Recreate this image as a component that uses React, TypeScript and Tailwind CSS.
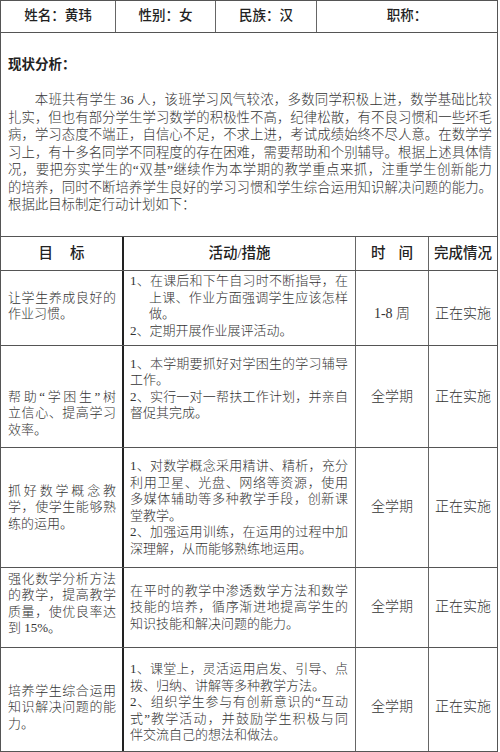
import clsx from 'clsx'

type Line = { t: string; j?: boolean; hang?: boolean }

type PlanRow = {
  h: string
  goal: Line[]
  goalPad: string
  act: Line[]
  actPad: string
  time: string
  timePad: string
}

const intro: Line[] = [
  { t: '本班共有学生 36 人，该班学习风气较浓，多数同学积极上进，数学基础比较', j: true },
  { t: '扎实，但也有部分学生学习数学的积极性不高，纪律松散，有不良习惯和一些坏毛', j: true },
  { t: '病，学习态度不端正，自信心不足，不求上进，考试成绩始终不尽人意。在数学学', j: true },
  { t: '习上，有十多名同学不同程度的存在困难，需要帮助和个别辅导。根据上述具体情', j: true },
  { t: '况，要把夯实学生的“双基”继续作为本学期的教学重点来抓，注重学生创新能力', j: true },
  { t: '的培养，同时不断培养学生良好的学习习惯和学生综合运用知识解决问题的能力。', j: true },
  { t: '根据此目标制定行动计划如下：' },
]

const rows: PlanRow[] = [
  {
    h: 'h-[75px]',
    goal: [{ t: '让学生养成良好的', j: true }, { t: '作业习惯。' }],
    goalPad: 'pb-[4px]',
    act: [
      { t: '1、在课后和下午自习时不断指导，在', j: true },
      { t: '上课、作业方面强调学生应该怎样', j: true, hang: true },
      { t: '做。', hang: true },
      { t: '2、定期开展作业展评活动。' },
    ],
    actPad: 'pb-[4px]',
    time: '1-8 周',
    timePad: 'pt-[12px]',
  },
  {
    h: 'h-[102px]',
    goal: [
      { t: '帮助“学困生”树', j: true },
      { t: '立信心、提高学习', j: true },
      { t: '效率。' },
    ],
    goalPad: 'pt-[34px]',
    act: [
      { t: '1、本学期要抓好对学困生的学习辅导', j: true },
      { t: '工作。' },
      { t: '2、实行一对一帮扶工作计划，并亲自', j: true },
      { t: '督促其完成。' },
    ],
    actPad: 'pb-[16px]',
    time: '全学期',
    timePad: 'pt-[2px]',
  },
  {
    h: 'h-[120px]',
    goal: [
      { t: '抓好数学概念教', j: true },
      { t: '学，使学生能够熟', j: true },
      { t: '练的运用。' },
    ],
    goalPad: '',
    act: [
      { t: '1、对数学概念采用精讲、精析，充分', j: true },
      { t: '利用卫星、光盘、网络等资源，使用', j: true },
      { t: '多媒体辅助等多种教学手段，创新课', j: true },
      { t: '堂教学。' },
      { t: '2、加强运用训练，在运用的过程中加', j: true },
      { t: '深理解，从而能够熟练地运用。' },
    ],
    actPad: '',
    time: '全学期',
    timePad: '',
  },
  {
    h: 'h-[80px]',
    goal: [
      { t: '强化数学分析方法', j: true },
      { t: '的教学，提高教学', j: true },
      { t: '质量，使优良率达', j: true },
      { t: '到 15%。' },
    ],
    goalPad: 'pb-[8px]',
    act: [
      { t: '在平时的教学中渗透数学方法和数学', j: true },
      { t: '技能的培养，循序渐进地提高学生的', j: true },
      { t: '知识技能和解决问题的能力。' },
    ],
    actPad: '',
    time: '全学期',
    timePad: '',
  },
  {
    h: 'h-[103px]',
    goal: [
      { t: '培养学生综合运用', j: true },
      { t: '知识解决问题的能', j: true },
      { t: '力。' },
    ],
    goalPad: 'pt-[16px]',
    act: [
      { t: '1、课堂上，灵活运用启发、引导、点', j: true },
      { t: '拨、归纳、讲解等多种教学方法。' },
      { t: '2、组织学生参与有创新意识的“互动', j: true },
      { t: '式”教学活动，并鼓励学生积极与同', j: true },
      { t: '伴交流自己的想法和做法。' },
    ],
    actPad: 'pt-[6px]',
    time: '全学期',
    timePad: 'pt-[16px]',
  },
]

function TextLines({ lines }: { lines: Line[] }) {
  return (
    <div>
      {lines.map((l, i) => (
        <div
          key={i}
          className={clsx(
            l.j ? 'text-justify [text-align-last:justify]' : 'text-left',
            l.hang && 'pl-[19px]'
          )}
        >
          {l.t}
        </div>
      ))}
    </div>
  )
}

export default function App() {
  return (
    <div className="w-[500px] h-[752px] bg-white font-['Liberation_Serif','Noto_Sans_CJK_SC',serif] font-light text-[#333]">
      <div className="w-[498px] border border-[#555]">

        {/* 基本信息 */}
        <div className="flex h-[32px] border-b border-[#555] text-[13.5px] font-medium text-[#222]">
          <div className="w-[115px] border-r border-[#666] flex items-center justify-center">姓名：黄玮</div>
          <div className="w-[100px] border-r border-[#666] flex items-center justify-center">性别：女</div>
          <div className="w-[101px] border-r border-[#666] flex items-center justify-center">民族：汉</div>
          <div className="flex-1 flex items-center justify-center">职称：</div>
        </div>

        {/* 现状分析 */}
        <div className="h-[204px] border-b border-[#555] pt-[22px] pl-[7px]">
          <div className="text-[13.5px] leading-[20px] font-bold text-[#222]">现状分析：</div>
          <div className="mt-[16px] w-[484px] text-[13.4px] leading-[17.5px]">
            {intro.map((l, i) => (
              <div
                key={i}
                className={clsx(
                  l.j ? 'text-justify [text-align-last:justify]' : 'text-left',
                  i === 0 && 'indent-[2em]'
                )}
              >
                {l.t}
              </div>
            ))}
          </div>
        </div>

        {/* 表头 */}
        <div className="flex h-[34px] border-b border-[#555] text-[14.5px] font-medium text-[#222]">
          <div className="w-[123px] border-r-2 border-[#222] flex items-center justify-center gap-[17px]">
            <span>目</span>
            <span>标</span>
          </div>
          <div className="w-[232px] border-r border-[#666] flex items-center justify-center">活动/措施</div>
          <div className="w-[73px] border-r border-[#666] flex items-center justify-center gap-[13px]">
            <span>时</span>
            <span>间</span>
          </div>
          <div className="flex-1 flex items-center justify-center">完成情况</div>
        </div>

        {/* 计划 */}
        {rows.map((r, i) => (
          <div
            key={i}
            className={clsx(
              'flex text-[13px] leading-[16.5px]',
              r.h,
              i < rows.length - 1 && 'border-b border-[#555]'
            )}
          >
            <div className={clsx('w-[123px] border-r-2 border-[#222] pl-[7px] pr-[6px] flex flex-col justify-center', r.goalPad)}>
              <TextLines lines={r.goal} />
            </div>
            <div className={clsx('w-[232px] border-r border-[#666] pl-[6px] pr-[7px] flex flex-col justify-center', r.actPad)}>
              <TextLines lines={r.act} />
            </div>
            <div className={clsx('w-[73px] border-r border-[#666] flex items-center justify-center text-[14px]', r.timePad)}>
              {r.time}
            </div>
            <div className={clsx('flex-1 flex items-center justify-center text-[14px]', r.timePad)}>
              正在实施
            </div>
          </div>
        ))}
      </div>
    </div>
  )
}
